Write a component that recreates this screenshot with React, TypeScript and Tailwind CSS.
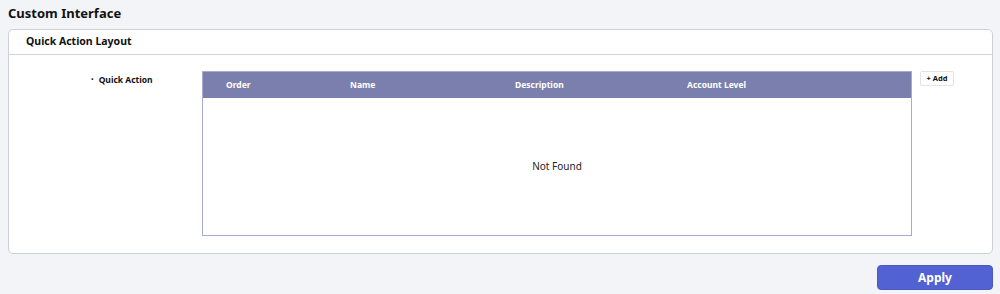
import React from 'react';

const columns = ['Order', 'Name', 'Description', 'Account Level'];

export default function App() {
  return (
    <div className="min-h-screen w-[1000px] h-[294px] bg-[#f3f4f8] font-['Noto_Sans',sans-serif] text-[#111]">
      {/* Title */}
      <h1 className="pl-[8px] pt-[4px] h-[29px] text-[13px] font-bold leading-[18px] text-[#111]">
        Custom Interface
      </h1>

      {/* Card */}
      <div className="ml-[8px] w-[985px] h-[225px] rounded-[5px] border border-[#cfd0d6] bg-white">
        <div className="h-[25px] flex items-center pl-[17px] border-b border-[#d2d3d8]">
          <span className="text-[10.5px] font-bold">Quick Action Layout</span>
        </div>

        <div className="flex pt-[16px]">
          <div className="w-[193px] flex items-start pl-[82px] pt-[2px]">
            <span className="text-[7px] leading-[14px] mr-[5px]">•</span>
            <span className="text-[8.5px] font-bold leading-[14px]">Quick Action</span>
          </div>

          {/* Table */}
          <div className="w-[710px] h-[165px] border border-[#a8abcf] flex flex-col">
            <div className="h-[26px] bg-[#7a7fad] grid grid-cols-[124px_165px_172px_1fr] items-center pl-[23px] text-white text-[8.5px] font-bold">
              {columns.map((c) => (
                <span key={c}>{c}</span>
              ))}
            </div>
            <div className="flex-1 flex items-center justify-center text-[10px] text-[#222]">
              Not Found
            </div>
          </div>

          <button className="ml-[8px] h-[15px] w-[34px] rounded-[2px] border border-[#e2e3e8] bg-white text-[7.5px] font-bold leading-[13px]">
            + Add
          </button>
        </div>
      </div>

      {/* Footer */}
      <div className="flex justify-end pr-[7px] pt-[11px]">
        <button className="w-[116px] h-[25px] rounded-[4px] bg-[#5262d3] border border-[#4a59c7] text-white text-[12px] font-bold leading-[20px]">
          Apply
        </button>
      </div>
    </div>
  );
}
